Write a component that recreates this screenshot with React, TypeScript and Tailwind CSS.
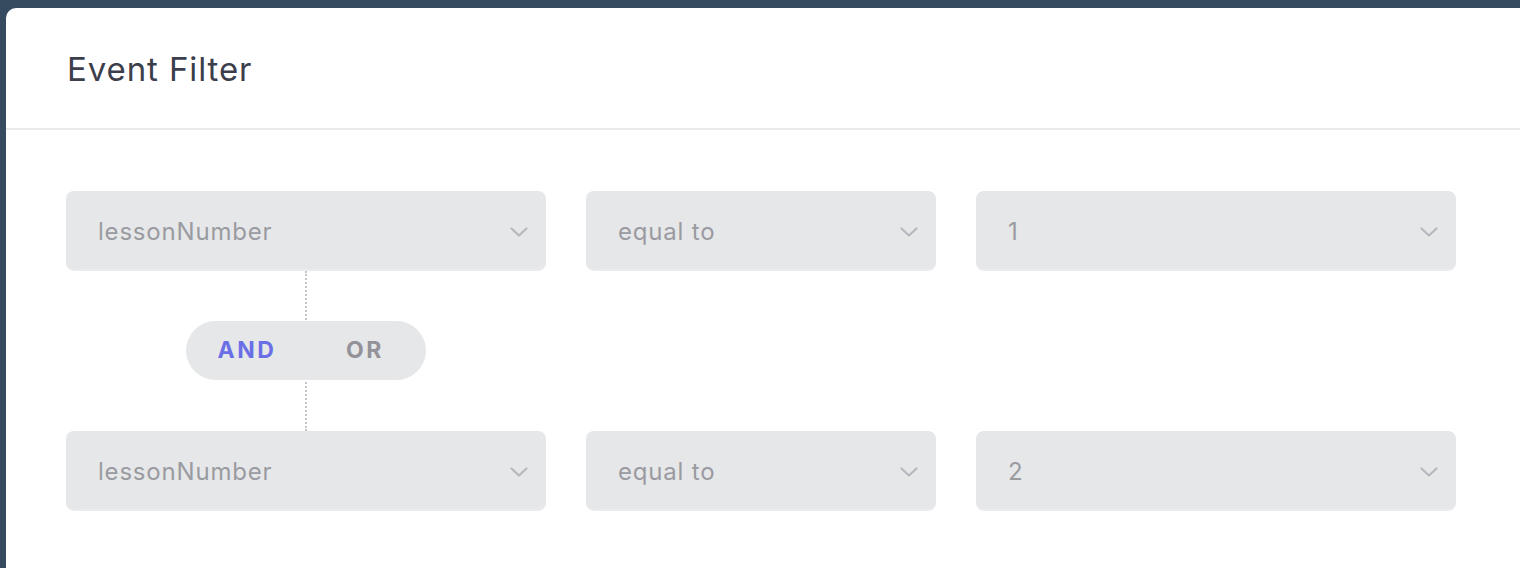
import React from "react";

function Chevron() {
  return (
    <svg width="18" height="10" viewBox="0 0 18 10" fill="none" className="shrink-0 mt-[4px]">
      <path d="M1.5 1.5 L9 8.5 L16.5 1.5" stroke="#b7b8bd" strokeWidth="2.2" strokeLinecap="round" strokeLinejoin="round" />
    </svg>
  );
}

function Select({ value, width }: { value: string; width: string }) {
  return (
    <div
      className={`${width} h-[80px] rounded-[8px] bg-[#e6e7e9] border-b-2 border-[#ececee] flex items-center justify-between pl-[32px] pr-[18px]`}
    >
      <span className="text-[24px] leading-[30px] pt-[3px] text-[#9a9ba0] tracking-[0.8px]">{value}</span>
      <Chevron />
    </div>
  );
}

function Row({ v1, v3 }: { v1: string; v3: string }) {
  return (
    <div className="flex gap-[40px]">
      <Select value={v1} width="w-[480px]" />
      <Select value="equal to" width="w-[350px]" />
      <Select value={v3} width="w-[480px]" />
    </div>
  );
}

export default function App() {
  return (
    <div
      className="w-[1520px] h-[568px] bg-[#364b60] pl-[6px] pt-[8px] overflow-hidden relative"
      style={{ fontFamily: "Inter, 'Noto Sans', sans-serif" }}
    >
      <div className="h-full bg-white rounded-tl-[10px]">
        <div className="h-[122px] border-b-2 border-[#e9e9eb] pl-[61px] pt-[39px]">
          <h1 className="text-[33px] leading-[44px] text-[#3c3e4c] tracking-[0.9px]">Event Filter</h1>
        </div>
        <div className="pl-[60px] pt-[61px]">
          <Row v1="lessonNumber" v3="1" />
          <div className="relative h-[160px] w-[480px]">
            <div className="absolute left-[239px] top-0 h-full border-l-2 border-dotted border-[#c6c6c8]" />
          </div>
          <Row v1="lessonNumber" v3="2" />
        </div>
      </div>
      <div className="absolute left-[186px] top-[321px] w-[240px] h-[59px] rounded-full bg-[#e6e7e9] flex items-center text-[23px] font-bold tracking-[2.6px]">
        <span className="w-[120px] text-center text-[#6a6fe6] pl-[2px]">AND</span>
        <span className="w-[120px] text-center text-[#929298] pr-[2px]">OR</span>
      </div>
    </div>
  );
}
